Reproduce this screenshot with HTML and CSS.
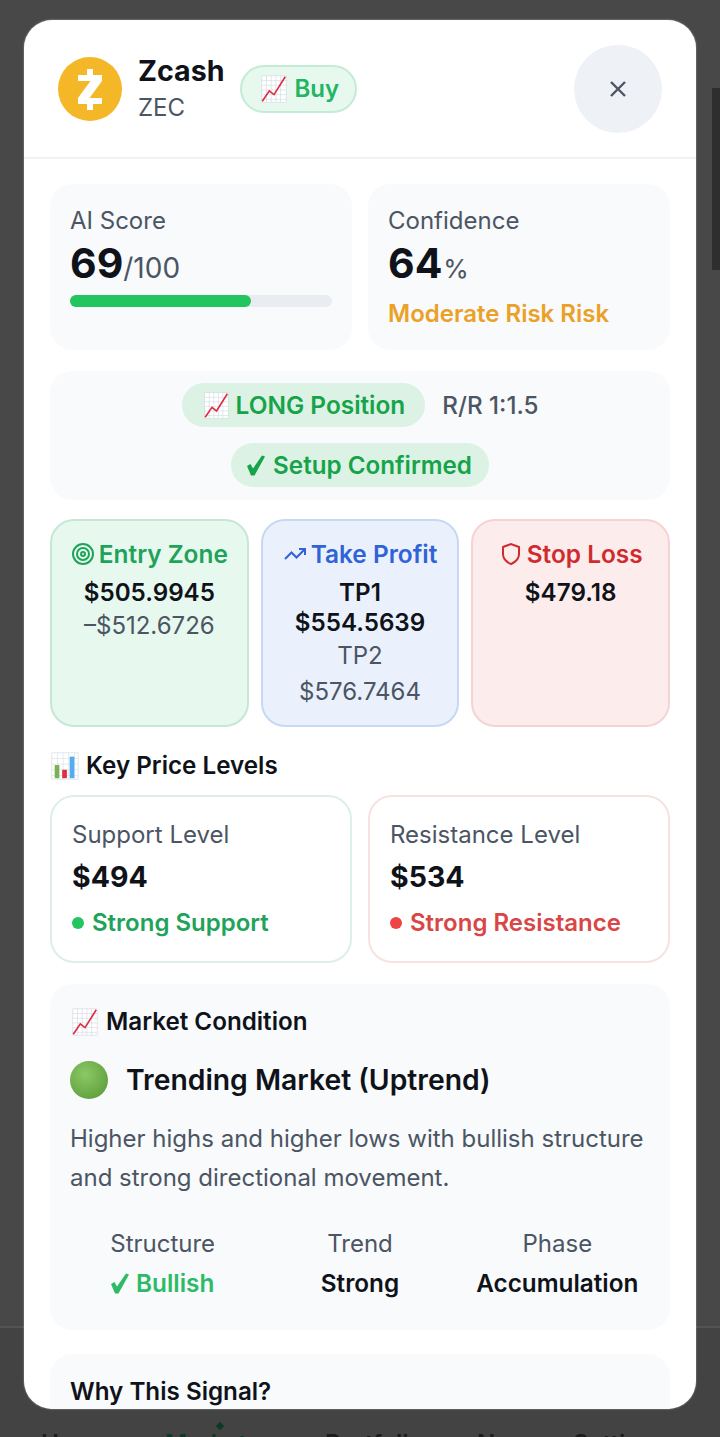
FILE: index.html
```html
<!DOCTYPE html>
<html lang="en">
<head>
    <meta charset="UTF-8">
    <meta name="viewport" content="width=device-width, initial-scale=1.0">
    <title>Zcash Signal</title>
    <link rel="stylesheet" href="styles.css">
</head>
<body>
    <svg class="defs" width="0" height="0" aria-hidden="true">
        <symbol id="chart-up" viewBox="0 0 32 32">
            <rect x="3" y="2" width="26" height="28" fill="#fff" stroke="#ccd6dd" stroke-width=".6"/>
            <path d="M3 7h26M3 12h26M3 17h26M3 22h26M3 27h26M8 2v28M13 2v28M18 2v28M23 2v28" stroke="#ccd6dd" stroke-width=".6" fill="none"/>
            <path d="M3.5 29 L11 18 L16 22 L28 3" stroke="#dd2e44" stroke-width="1.8" fill="none"/>
        </symbol>
        <symbol id="tick" viewBox="0 0 18 20">
            <path d="M0 10.500L3.500 8.500L6 13L15 0L18 1L7.500 20H4z" fill="currentColor"/>
        </symbol>
    </svg>

    <!-- page behind the modal -->
    <div class="page">
        <div class="page-main"></div>
        <nav class="tabbar">
            <span class="tab">Home</span>
            <span class="tab tab-active">Markets</span>
            <span class="tab">Portfolio</span>
            <span class="tab">News</span>
            <span class="tab">Settings</span>
        </nav>
    </div>
    <div class="page-thumb"></div>
    <div class="tab-dot"></div>

    <div class="modal">
        <header class="modal-head">
            <svg class="coin" viewBox="0 0 64 64">
                <circle cx="32" cy="32" r="32" fill="#f4b728"/>
                <path d="M29 12h6v6h9v6L31.500 41H44v6h-9v6h-6v-6h-9v-6l12.500-17H20v-6h9z" fill="#fff"/>
            </svg>
            <div class="coin-name">
                <div class="coin-title">Zcash</div>
                <div class="coin-sym">ZEC</div>
            </div>
            <div class="buy-badge">
                <svg class="emoji"><use href="#chart-up"/></svg>
                <span>Buy</span>
            </div>
            <button class="close-btn">
                <svg viewBox="0 0 24 24" width="24" height="24"><path d="M5 5l14 14M19 5L5 19" stroke="#4b5563" stroke-width="2.400" fill="none"/></svg>
            </button>
        </header>

        <div class="modal-body">
            <div class="two-col">
                <div class="score-card">
                    <div class="label">AI Score</div>
                    <div class="score"><b>69</b><span>/100</span></div>
                    <div class="bar"><div class="bar-fill" style="width: 69%"></div></div>
                </div>
                <div class="score-card">
                    <div class="label">Confidence</div>
                    <div class="score"><b>64</b><span class="pct">%</span></div>
                    <div class="risk">Moderate Risk Risk</div>
                </div>
            </div>

            <div class="setup-card">
                <div class="setup-row">
                    <span class="pill pill-long">
                        <svg class="emoji"><use href="#chart-up"/></svg>
                        LONG Position
                    </span>
                    <span class="rr">R/R 1:1.5</span>
                </div>
                <div class="setup-row">
                    <span class="pill pill-setup"><svg class="tick"><use href="#tick"/></svg>Setup Confirmed</span>
                </div>
            </div>

            <div class="three-col">
                <div class="zone zone-entry">
                    <div class="zone-title">
                        <svg viewBox="0 0 24 24" width="24" height="24" fill="none" stroke="currentColor" stroke-width="2"><circle cx="12" cy="12" r="10"/><circle cx="12" cy="12" r="6"/><circle cx="12" cy="12" r="2"/></svg>
                        Entry Zone
                    </div>
                    <div class="zone-val">$505.9945</div>
                    <div class="zone-sub">–$512.6726</div>
                </div>
                <div class="zone zone-profit">
                    <div class="zone-title">
                        <svg viewBox="0 0 24 24" width="24" height="24" fill="none" stroke="currentColor" stroke-width="2"><path d="M22 7l-8.500 8.500-5-5L2 17"/><path d="M16 7h6v6"/></svg>
                        Take Profit
                    </div>
                    <div class="zone-val">TP1<br>$554.5639</div>
                    <div class="zone-sub">TP2</div>
                    <div class="zone-sub">$576.7464</div>
                </div>
                <div class="zone zone-stop">
                    <div class="zone-title">
                        <svg viewBox="0 0 24 24" width="24" height="24" fill="none" stroke="currentColor" stroke-width="2"><path d="M12 22s8-3 8-10V5l-8-3-8 3v7c0 7 8 10 8 10z"/></svg>
                        Stop Loss
                    </div>
                    <div class="zone-val">$479.18</div>
                </div>
            </div>

            <h3 class="section-title">
                <svg class="emoji" viewBox="0 0 32 32">
                    <rect x="2" y="2" width="28" height="28" fill="#fff" stroke="#ccd6dd" stroke-width=".6"/>
                    <path d="M2 8h28M2 14h28M2 20h28M2 26h28M8 2v28M14 2v28M20 2v28M26 2v28" stroke="#ccd6dd" stroke-width=".5"/>
                    <rect x="5" y="15" width="5" height="14" fill="#77b255"/>
                    <rect x="13" y="20" width="5" height="9" fill="#dd2e44"/>
                    <rect x="21" y="6" width="5" height="23" fill="#55acee"/>
                </svg>
                Key Price Levels
            </h3>
            <div class="two-col">
                <div class="level level-sup">
                    <div class="level-label">Support Level</div>
                    <div class="level-val">$494</div>
                    <div class="level-note"><i class="dot"></i>Strong Support</div>
                </div>
                <div class="level level-res">
                    <div class="level-label">Resistance Level</div>
                    <div class="level-val">$534</div>
                    <div class="level-note"><i class="dot"></i>Strong Resistance</div>
                </div>
            </div>

            <div class="market-card">
                <h3 class="section-title">
                    <svg class="emoji"><use href="#chart-up"/></svg>
                    Market Condition
                </h3>
                <div class="market-head">
                    <i class="green-ball"></i>
                    <span>Trending Market (Uptrend)</span>
                </div>
                <p class="market-text">Higher highs and higher lows with bullish structure and strong directional movement.</p>
                <div class="market-stats">
                    <div class="stat">
                        <div class="stat-label">Structure</div>
                        <div class="stat-val bullish"><svg class="tick"><use href="#tick"/></svg>Bullish</div>
                    </div>
                    <div class="stat">
                        <div class="stat-label">Trend</div>
                        <div class="stat-val">Strong</div>
                    </div>
                    <div class="stat">
                        <div class="stat-label">Phase</div>
                        <div class="stat-val">Accumulation</div>
                    </div>
                </div>
            </div>

            <div class="why-card">
                <h3 class="section-title">Why This Signal?</h3>
            </div>
        </div>
    </div>
</body>
</html>
```

FILE: styles.css
```css
* {
    box-sizing: border-box;
}
html, body {
    margin: 0;
    height: 1437px;
    overflow: hidden;
}
body {
    position: relative;
    background-color: #484848;
    font-family: Inter, "Liberation Sans", sans-serif;
    color: #0f1319;
}
.defs {
    position: absolute;
}
.page {
    height: 1437px;
    display: flex;
    flex-direction: column;
}
.page-main {
    flex: 1;
}
.tabbar {
    height: 111px;
    border-top: 2px solid #545454;
    background-color: #434343;
    display: grid;
    grid-template-columns: 124px 160px 152px 96px 1fr;
    padding: 101px 0 0 41px;
    font-size: 24px;
    font-weight: 600;
    color: #1c1c1c;
}
.tab-active {
    color: #0d3a26;
}
.page-thumb {
    position: absolute;
    top: 88px;
    right: 0;
    width: 8px;
    height: 182px;
    background-color: #2e2e2e;
}
.tab-dot {
    position: absolute;
    top: 1423px;
    left: 217px;
    width: 6px;
    height: 6px;
    background-color: #0d3a26;
    transform: rotate(45deg);
}

.modal {
    position: absolute;
    top: 20px;
    left: 24px;
    width: 672px;
    height: 1389px;
    background-color: white;
    border-radius: 28px;
    overflow: hidden;
    box-shadow: 0 0 2px rgba(255, 255, 255, 0.5);
}
.modal-head {
    height: 139px;
    border-bottom: 2px solid #f0f2f5;
    padding: 0 34px;
    display: flex;
    align-items: center;
}
.coin {
    width: 64px;
    height: 64px;
    flex-shrink: 0;
}
.coin-name {
    margin-left: 16px;
}
.coin-title {
    margin-top: 1px;
    font-size: 28.600px;
    font-weight: 700;
    line-height: 36px;
}
.coin-sym {
    margin-top: 1px;
    font-size: 24px;
    color: #4b5563;
    line-height: 36px;
}
.buy-badge {
    margin-left: 15px;
    height: 48px;
    padding: 0 16px 0 17px;
    display: flex;
    align-items: center;
    gap: 6px;
    background-color: #e7f8ef;
    border: 2px solid #c4ecd5;
    border-radius: 24px;
    font-size: 24px;
    font-weight: 600;
    color: #22b562;
}
.emoji {
    width: 30px;
    height: 30px;
    flex-shrink: 0;
}
.close-btn {
    margin-left: auto;
    width: 88px;
    height: 88px;
    border: none;
    border-radius: 50%;
    background-color: #eef1f6;
    display: flex;
    align-items: center;
    justify-content: center;
}

.modal-body {
    padding: 25px 26px 0;
    display: flex;
    flex-direction: column;
}
.two-col {
    display: grid;
    grid-template-columns: 1fr 1fr;
    gap: 16px;
}
.score-card {
    height: 166px;
    padding: 23px 20px;
    background-color: #f8fafc;
    border-radius: 22px;
}
.label {
    font-size: 24px;
    line-height: 28px;
    color: #4b5563;
}
.score {
    margin-top: 4px;
    line-height: 48px;
    color: #4b5563;
    font-size: 28px;
}
.score b {
    font-size: 41px;
    color: #0f1319;
}
.score .pct {
    margin-left: 1px;
    font-size: 26px;
}
.bar {
    margin-top: 3px;
    height: 12px;
    background-color: #e9ecf1;
    border-radius: 6px;
}
.bar-fill {
    height: 12px;
    background-color: #22c55e;
    border-radius: 6px;
}
.risk {
    margin-top: 6px;
    font-size: 24px;
    line-height: 30px;
    font-weight: 600;
    color: #eba128;
}

.setup-card {
    margin-top: 21px;
    height: 129px;
    padding-top: 12px;
    background-color: #f8fafc;
    border-radius: 22px;
    display: flex;
    flex-direction: column;
    gap: 16px;
}
.setup-row {
    display: flex;
    justify-content: center;
    align-items: center;
    gap: 17px;
    height: 44px;
}
.pill {
    height: 44px;
    display: flex;
    align-items: center;
    background-color: #dcf2e5;
    border-radius: 22px;
    font-size: 24.200px;
    font-weight: 600;
    color: #16a34a;
}
.pill-long {
    padding: 0 20px;
    gap: 5px;
    font-size: 24.400px;
}
.pill-setup {
    padding: 0 17px 0 16px;
    gap: 8px;
}
.pill .emoji {
    width: 29px;
    height: 29px;
}
.tick {
    width: 18px;
    height: 21px;
    flex-shrink: 0;
}
.rr {
    font-size: 24.200px;
    font-weight: 500;
    color: #4b5563;
}

.three-col {
    margin-top: 19px;
    display: grid;
    grid-template-columns: repeat(3, 1fr);
    gap: 12px;
}
.zone {
    height: 208px;
    padding: 18px 4px 0;
    border: 2px solid;
    border-radius: 24px;
    text-align: center;
}
.zone-entry {
    background-color: #e7f8ee;
    border-color: #c5e8d4;
}
.zone-profit {
    background-color: #eaf1fd;
    border-color: #c6d8f2;
}
.zone-stop {
    background-color: #fdecec;
    border-color: #f6d3d3;
}
.zone-title {
    display: flex;
    justify-content: center;
    align-items: center;
    gap: 4px;
    font-size: 24.400px;
    line-height: 30px;
    font-weight: 600;
}
.zone-entry .zone-title { color: #1fa35a; }
.zone-profit .zone-title { color: #2f63d6; }
.zone-stop .zone-title { color: #cf2b2f; }
.zone-val {
    margin-top: 9px;
    font-size: 24.200px;
    line-height: 30px;
    font-weight: 600;
}
.zone-sub {
    font-size: 24px;
    line-height: 36px;
    color: #4b5563;
}

.section-title {
    margin: 0;
    display: flex;
    align-items: center;
    gap: 6px;
    font-size: 24.200px;
    line-height: 30px;
    font-weight: 600;
}
.modal-body > .section-title {
    margin: 24px 0 14px;
}
.level {
    height: 168px;
    padding: 24px 20px;
    background-color: white;
    border: 2px solid;
    border-radius: 24px;
}
.level-sup { border-color: #dcf0e6; }
.level-res { border-color: #f8e1e1; }
.level-label {
    font-size: 24px;
    line-height: 28px;
    color: #4b5563;
}
.level-val {
    margin-top: 9px;
    font-size: 28.500px;
    line-height: 38px;
    font-weight: 700;
}
.level-note {
    margin-top: 12px;
    display: flex;
    align-items: center;
    gap: 8px;
    font-size: 24px;
    line-height: 30px;
    font-weight: 600;
}
.dot {
    width: 12px;
    height: 12px;
    border-radius: 50%;
}
.level-sup .level-note { color: #1fa35a; }
.level-sup .dot { background-color: #22c55e; }
.level-res .level-note { color: #d94646; }
.level-res .dot { background-color: #ef4444; }

.market-card {
    margin-top: 21px;
    padding: 23px 20px 0;
    height: 346px;
    background-color: #f8fafc;
    border-radius: 22px;
}
.market-head {
    margin-top: 23px;
    display: flex;
    align-items: center;
    gap: 18px;
    font-size: 28.300px;
    line-height: 40px;
    font-weight: 600;
}
.green-ball {
    width: 38px;
    height: 38px;
    border-radius: 50%;
    background: radial-gradient(circle at 40% 35%, #8cc866, #62a33f 75%);
}
.market-text {
    margin: 19px 0 0;
    font-size: 24px;
    line-height: 39px;
    color: #4b5563;
}
.market-stats {
    margin: 33px -6px 0;
    display: grid;
    grid-template-columns: repeat(3, 1fr);
    text-align: center;
}
.stat-label {
    font-size: 24px;
    line-height: 28px;
    color: #4b5563;
}
.stat-val {
    margin-top: 10px;
    font-size: 24.300px;
    line-height: 30px;
    font-weight: 600;
}
.bullish {
    display: flex;
    justify-content: center;
    align-items: center;
    gap: 7px;
    color: #2ebb68;
}
.why-card {
    margin-top: 24px;
    padding: 23px 20px;
    height: 200px;
    background-color: #f8fafc;
    border-radius: 22px;
}
```
